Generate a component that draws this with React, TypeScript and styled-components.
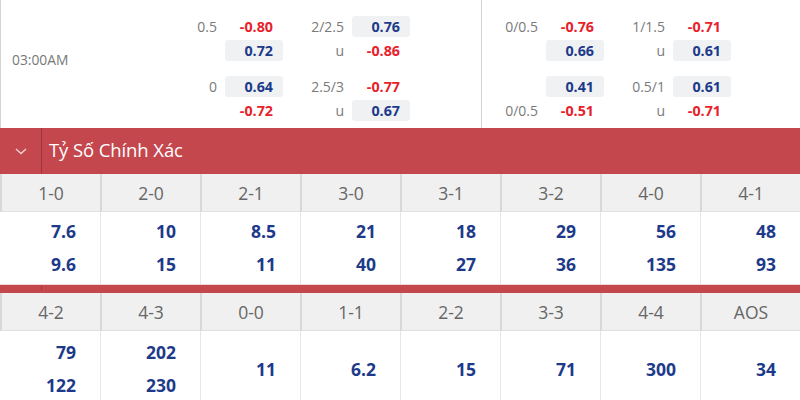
import React from "react";
import styled, { createGlobalStyle } from "styled-components";

const Global = createGlobalStyle`
  html, body { margin: 0; padding: 0; background: #ffffff; }
  body { font-family: "Open Sans", "Noto Sans", Arial, sans-serif; width: 800px; height: 400px; overflow: hidden; }
  * { box-sizing: border-box; }
`;

const Page = styled.div`
  width: 800px;
  display: flex;
  flex-direction: column;
`;

const OddsSection = styled.div`
  display: flex;
  height: 128px;
  border-left: 1px solid #d4d4d4;
`;

const Half = styled.div<{ $divider?: boolean }>`
  display: flex;
  width: ${(p) => (p.$divider ? "481px" : "318px")};
  border-right: ${(p) => (p.$divider ? "1px solid #d2d2d2" : "none")};
`;

const TimeCell = styled.div`
  width: 160px;
  display: flex;
  align-items: center;
  padding: 0 0 10px 11px;
  color: #777;
  font-size: 13.8px;
`;

const Blocks = styled.div`
  display: flex;
  flex-direction: column;
  padding-top: 8px;
`;

const Block = styled.div`
  height: 60px;
  padding: 6px 0;
  display: flex;
  flex-direction: column;
`;

const Line = styled.div`
  display: flex;
  gap: 5px;
  height: 24px;
`;

const Group = styled.div`
  display: grid;
  grid-template-columns: 56px 58px;
  column-gap: 8px;
  align-items: center;
`;

const Label = styled.span`
  text-align: right;
  color: #7a7a7a;
  font-size: 14px;
`;

const Value = styled.span<{ $neg?: boolean }>`
  height: 21px;
  line-height: 21px;
  text-align: right;
  padding-right: 10px;
  border-radius: 3px;
  font-size: 14.3px;
  font-weight: 700;
  color: ${(p) => (p.$neg ? "#e8212b" : "#1d3a8a")};
  background: ${(p) => (p.$neg ? "transparent" : "#f0f1f3")};
`;

const RedHeader = styled.div`
  display: flex;
  height: 46px;
  background: #c4474e;
  color: #fff;
`;

const Chevron = styled.div`
  width: 42px;
  border-right: 1px solid #9e333a;
  display: flex;
  align-items: center;
  justify-content: center;
`;

const Title = styled.div`
  display: flex;
  align-items: center;
  padding: 0 0 3px 7px;
  font-size: 18.5px;
  letter-spacing: -0.1px;
`;

const Grid = styled.div`
  display: grid;
  grid-template-columns: repeat(8, 100px);
`;

const HeadCell = styled.div`
  height: 38px;
  display: flex;
  align-items: center;
  justify-content: center;
  background: #f0f0f0;
  color: #666;
  font-size: 17.5px;
  border-left: 2px solid #d8d8d8;
  border-bottom: 1px solid #e0e0e0;
`;

const ValueCell = styled.div<{ $h: number; $first?: boolean }>`
  height: ${(p) => p.$h}px;
  display: flex;
  flex-direction: column;
  justify-content: center;
  align-items: flex-end;
  padding-right: 24px;
  border-left: 1px solid ${(p) => (p.$first ? "#ffffff" : "#e6e6e6")};
`;

const Num = styled.span`
  height: 33px;
  line-height: 33px;
  font-size: 17.5px;
  font-weight: 700;
  color: #1d3a8a;
`;

const Band = styled.div`
  height: 9px;
  background: #c4474e;
  border-top: 1px solid #f2d3d5;
  display: flex;
`;

const BandTick = styled.div`
  width: 42px;
  border-right: 1px solid #9e333a;
  margin-top: 1px;
  height: 4px;
`;

type Odd = { l?: string; v: string };
type LineData = Odd[];

const leftBlocks: LineData[][] = [
  [
    [{ l: "0.5", v: "-0.80" }, { l: "2/2.5", v: "0.76" }],
    [{ v: "0.72" }, { l: "u", v: "-0.86" }],
  ],
  [
    [{ l: "0", v: "0.64" }, { l: "2.5/3", v: "-0.77" }],
    [{ v: "-0.72" }, { l: "u", v: "0.67" }],
  ],
];

const rightBlocks: LineData[][] = [
  [
    [{ l: "0/0.5", v: "-0.76" }, { l: "1/1.5", v: "-0.71" }],
    [{ v: "0.66" }, { l: "u", v: "0.61" }],
  ],
  [
    [{ v: "0.41" }, { l: "0.5/1", v: "0.61" }],
    [{ l: "0/0.5", v: "-0.51" }, { l: "u", v: "-0.71" }],
  ],
];

const table1 = {
  heads: ["1-0", "2-0", "2-1", "3-0", "3-1", "3-2", "4-0", "4-1"],
  vals: [["7.6", "9.6"], ["10", "15"], ["8.5", "11"], ["21", "40"], ["18", "27"], ["29", "36"], ["56", "135"], ["48", "93"]],
};
const table2 = {
  heads: ["4-2", "4-3", "0-0", "1-1", "2-2", "3-3", "4-4", "AOS"],
  vals: [["79", "122"], ["202", "230"], ["11"], ["6.2"], ["15"], ["71"], ["300"], ["34"]],
};

const OddsBlocks: React.FC<{ blocks: LineData[][] }> = ({ blocks }) => (
  <Blocks>
    {blocks.map((b, i) => (
      <Block key={i}>
        {b.map((line, j) => (
          <Line key={j}>
            {line.map((o, k) => (
              <Group key={k}>
                <Label>{o.l ?? ""}</Label>
                <Value $neg={o.v.startsWith("-")}>{o.v}</Value>
              </Group>
            ))}
          </Line>
        ))}
      </Block>
    ))}
  </Blocks>
);

const ScoreTable: React.FC<{ data: { heads: string[]; vals: string[][] }; h: number }> = ({ data, h }) => (
  <Grid>
    {data.heads.map((hd) => (
      <HeadCell key={hd}>{hd}</HeadCell>
    ))}
    {data.vals.map((v, i) => (
      <ValueCell key={i} $h={h} $first={i === 0}>
        {v.map((n, j) => (
          <Num key={j}>{n}</Num>
        ))}
      </ValueCell>
    ))}
  </Grid>
);

export default function App() {
  return (
    <Page>
      <Global />
      <OddsSection>
        <Half $divider>
          <TimeCell>03:00AM</TimeCell>
          <OddsBlocks blocks={leftBlocks} />
        </Half>
        <Half>
          <OddsBlocks blocks={rightBlocks} />
        </Half>
      </OddsSection>
      <RedHeader>
        <Chevron>
          <svg width="14" height="10" viewBox="0 0 14 10" fill="none">
            <path d="M2 3 L7 7.5 L12 3" stroke="#f3d0d2" strokeWidth="1.4" />
          </svg>
        </Chevron>
        <Title>Tỷ Số Chính Xác</Title>
      </RedHeader>
      <ScoreTable data={table1} h={72} />
      <Band>
        <BandTick />
      </Band>
      <ScoreTable data={table2} h={76} />
    </Page>
  );
}
